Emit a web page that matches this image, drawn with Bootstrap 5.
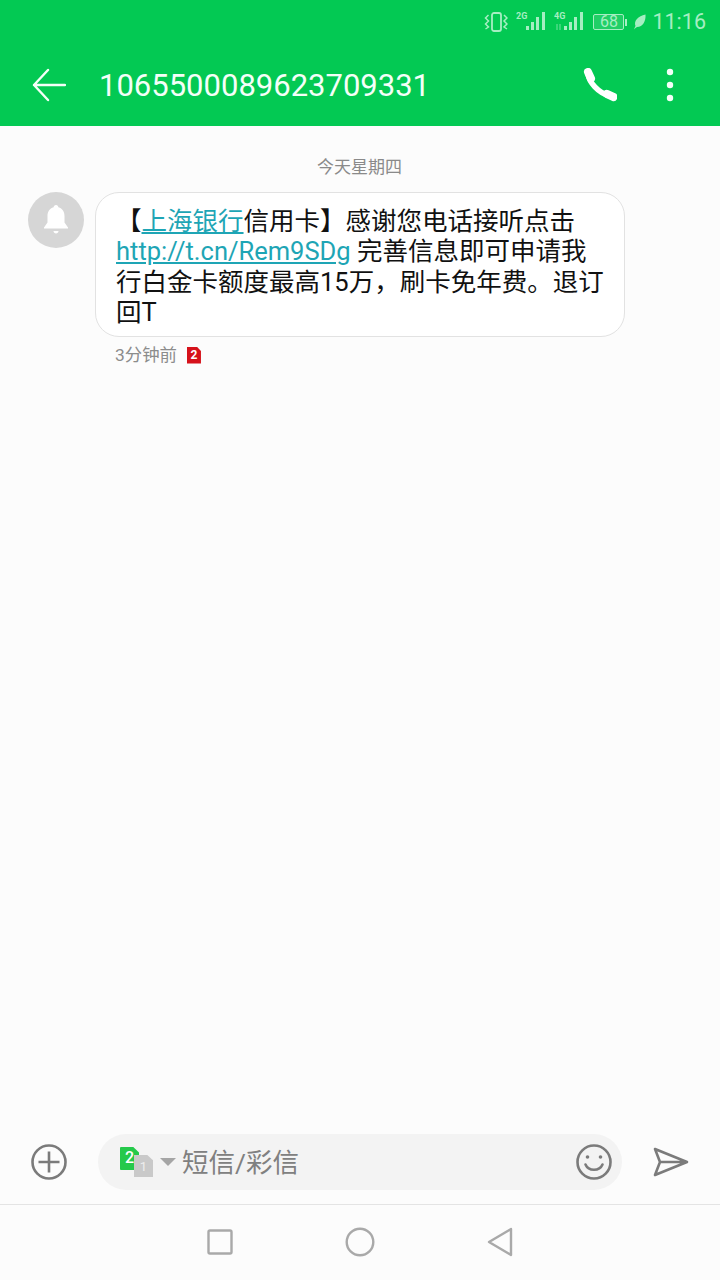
<!DOCTYPE html>
<html lang="zh">
<head>
  <meta charset="UTF-8">
  <meta name="viewport" content="width=device-width, initial-scale=1.0">
  <title>短信</title>
  <link rel="stylesheet" href="https://cdn.jsdelivr.net/npm/bootstrap@5.3.0/dist/css/bootstrap.min.css">
  <style>
    body {
      background: #fcfcfc;
      font-family: Roboto, "Noto Sans CJK SC", sans-serif;
      color: #1a1a1a;
    }
    .phone-page { width: 720px; height: 1280px; overflow: hidden; }
    .top-green { background: #03c953; color: #fff; }
    .status-row { height: 44px; padding-right: 14px; color: #a6eec2; line-height: 1; }
    .status-time { font-size: 21.5px; margin-left: 6px; }
    .st-vib { margin-right: 8px; }
    .st-g2 { margin-right: 7px; }
    .st-g4 { margin-right: 8px; }
    .bat-box { width: 31px; height: 16px; border: 1px solid #a6eec2; border-radius: 2px; font-size: 16px; line-height: 14px; text-align: center; background: rgba(255,255,255,.12); }
    .bat-tip { width: 2px; height: 7px; background: #a6eec2; margin: 0 6px 0 1px; }
    .tool-row { height: 82px; padding-left: 32px; }
    .tool-title { font-size: 31px; margin-left: 33px; line-height: 1; color: #f4fff8; }
    .call-icon { margin-right: 49px; }
    .more-icon { margin-right: 46px; }
    .day-label { font-size: 17px; color: #8a8a8a; text-align: center; padding-top: 32px; height: 66px; line-height: 18px; padding-right: 1px; }
    .avatar-dot { width: 56px; height: 56px; background: #d6d6d6; margin-left: 28px; margin-right: 11px; }
    .msg-bubble { width: 530px; height: 145px; border: 1px solid #e2e2e2; border-radius: 24px; background: #fff; padding: 13px 20px; font-size: 25.5px; line-height: 30.3px; color: #111; white-space: nowrap; }
    .msg-bubble a { color: #1ea5b5; }
    .msg-meta { margin: 8px 0 0 115px; font-size: 17.4px; line-height: 20px; color: #8c8c8c; gap: 10px; }
    .sim-red { width: 14px; height: 17px; background: #d6121b; color: #fff; font-size: 12px; font-weight: 700; line-height: 17px; text-align: center; clip-path: polygon(0 0, 70% 0, 100% 26%, 100% 100%, 0 100%); }
    .composer { height: 84px; padding: 14px 0; }
    .plus-slot { width: 98px; }
    .input-pill { width: 524px; height: 56px; background: #f3f3f3; border-radius: 28px; padding-left: 22px; }
    .sim-stack { width: 34px; height: 30px; }
    .sim-green { left: 0; top: 0; width: 19px; height: 23px; background: #25c94b; color: #fff; font-size: 16px; font-weight: 500; line-height: 22px; text-align: center; border-radius: 1px; clip-path: polygon(0 0, 70% 0, 100% 24%, 100% 100%, 0 100%); }
    .sim-gray { left: 14px; top: 8px; width: 19px; height: 22px; background: #c9c9c9; color: #eee; font-size: 13px; line-height: 24px; text-align: center; clip-path: polygon(0 0, 70% 0, 100% 24%, 100% 100%, 0 100%); }
    .caret-down { width: 0; height: 0; border: 8px solid transparent; border-top: 8px solid #a5a5a5; border-bottom: 0; margin: 0 6px; }
    .input-hint { font-size: 26.5px; color: #808080; line-height: 1; padding-top: 2px; }
    .smile-icon { margin-right: 10px; }
    .send-slot { width: 98px; padding-left: 31px; }
    .nav-strip { height: 76px; border-top: 1px solid #e4e4e4; background: #fcfcfc; padding-bottom: 1px; }
    .nav-slot { width: 140px; }
  </style>
</head>
<body>
  <div class="phone-page d-flex flex-column">
    <div class="top-green">
      <div class="status-row d-flex align-items-center justify-content-end">
        <svg class="st-vib" width="24" height="20" viewBox="0 0 24 20" fill="none" stroke="#a6eec2" stroke-width="1.800"><rect x="8" y="1" width="9" height="18" rx="2"/><path d="M4.500 3L1.500 6 4.500 9 1.500 12 4.500 15 1.500 17M20 3L23 6 20 9 23 12 20 15 23 17" stroke-width="1.500"/></svg>
        <svg class="st-g2" width="31" height="20" viewBox="0 0 31 20" fill="#a6eec2"><text x="0" y="7" font-size="9" font-weight="700" font-family="Roboto">2G</text><rect x="10" y="14" width="3" height="4"/><rect x="15" y="10" width="3" height="8"/><rect x="20" y="5" width="3" height="13"/><rect x="26" y="0" width="3" height="18"/></svg>
        <svg class="st-g4" width="31" height="20" viewBox="0 0 31 20" fill="#a6eec2"><text x="0" y="7" font-size="9" font-weight="700" font-family="Roboto">4G</text><rect x="2" y="12" width="2" height="6" opacity=".35"/><rect x="5" y="12" width="2" height="6" opacity=".35"/><rect x="10" y="14" width="3" height="4"/><rect x="15" y="10" width="3" height="8"/><rect x="20" y="5" width="3" height="13"/><rect x="26" y="0" width="3" height="18"/></svg>
        <div class="bat-box">68</div><div class="bat-tip"></div>
        <svg width="13" height="16" viewBox="0 0 13 16" fill="#a6eec2"><path d="M1 15.500C1.500 14 2 13 2.500 12 .5 7 5 2 12.500 .5 13 7 10 13 4 13 3 13.500 2 14.500 1 15.500z"/></svg>
        <span class="status-time">11:16</span>
      </div>
      <div class="tool-row d-flex align-items-center">
        <svg width="34" height="34" viewBox="0 0 34 34" fill="none" stroke="#f4fff8" stroke-width="2.400" stroke-linecap="round" stroke-linejoin="round"><path d="M33 17H2M16 2L2 17l14 15"/></svg>
        <span class="tool-title">1065500089623709331</span>
        <svg class="call-icon ms-auto" width="34" height="34" viewBox="0 0 34 34" fill="none" stroke="#fff" stroke-linecap="round"><path d="M5 6C6 14 15 25 27 28" stroke-width="5.500"/><path d="M5 4l3 6.500M24 26l6.500 3" stroke-width="8"/></svg>
        <svg class="more-icon" width="8" height="34" viewBox="0 0 8 34" fill="#f4fff8"><circle cx="4" cy="4" r="3.200"/><circle cx="4" cy="17" r="3.200"/><circle cx="4" cy="30" r="3.200"/></svg>
      </div>
    </div>

    <main class="flex-grow-1">
      <div class="day-label">今天星期四</div>
      <div class="d-flex align-items-start">
        <div class="avatar-dot rounded-circle d-flex align-items-center justify-content-center flex-shrink-0">
          <svg width="26" height="30" viewBox="0 0 26 30" fill="#fff"><path d="M13 0c1.400 0 2.400 1 2.400 2.300C19.500 3.400 21.500 7 21.500 11v6.500L25 22.500v1H1v-1l3.500-5V11c0-4 2-7.600 6.100-8.700C10.600 1 11.600 0 13 0z"/><path d="M10.500 26h5c0 1.500-1.100 2.500-2.500 2.500S10.500 27.500 10.500 26z"/></svg>
        </div>
        <div class="msg-bubble">【<a href="#">上海银行</a>信用卡】感谢您电话接听点击<br><a href="#">http://t.cn/Rem9SDg</a> 完善信息即可申请我<br>行白金卡额度最高15万，刷卡免年费。退订<br>回T</div>
      </div>
      <div class="msg-meta d-flex align-items-center">
        <span>3分钟前</span>
        <span class="sim-red">2</span>
      </div>
    </main>

    <div class="composer d-flex align-items-center">
      <div class="plus-slot d-flex justify-content-center">
        <svg width="36" height="36" viewBox="0 0 36 36" fill="none" stroke="#7b7b7b" stroke-width="2.600"><circle cx="18" cy="18" r="16.500"/><path d="M18 7.500v21M7.500 18h21"/></svg>
      </div>
      <div class="input-pill d-flex align-items-center">
        <div class="sim-stack position-relative flex-shrink-0">
          <div class="sim-green position-absolute">2</div>
          <div class="sim-gray position-absolute">1</div>
        </div>
        <span class="caret-down"></span>
        <span class="input-hint">短信/彩信</span>
        <svg class="smile-icon ms-auto" width="36" height="36" viewBox="0 0 36 36" fill="none" stroke="#7b7b7b" stroke-width="2.600" stroke-linecap="round"><circle cx="18" cy="18" r="16.500"/><path d="M9.500 20.500c3 7 14 7 17 0"/><circle cx="11.500" cy="13" r="1.800" fill="#7b7b7b" stroke="none"/><circle cx="24.500" cy="13" r="1.800" fill="#7b7b7b" stroke="none"/></svg>
      </div>
      <div class="send-slot">
        <svg class="d-block" width="36" height="30" viewBox="0 0 36 30" fill="none" stroke="#7b7b7b" stroke-width="2.600" stroke-linejoin="round"><path d="M2 2l32 13L2 28l5-13zM7 15h27"/></svg>
      </div>
    </div>

    <div class="nav-strip d-flex align-items-center justify-content-center">
      <div class="nav-slot d-flex justify-content-center">
        <svg width="26" height="26" viewBox="0 0 26 26" fill="none" stroke="#a9a9a9" stroke-width="2.400"><rect x="1.500" y="1.500" width="23" height="23" rx="1.500"/></svg>
      </div>
      <div class="nav-slot d-flex justify-content-center">
        <svg width="30" height="30" viewBox="0 0 30 30" fill="none" stroke="#a9a9a9" stroke-width="2.400"><circle cx="15" cy="15" r="13.300"/></svg>
      </div>
      <div class="nav-slot d-flex justify-content-center">
        <svg width="26" height="30" viewBox="0 0 26 30" fill="none" stroke="#a9a9a9" stroke-width="2.400" stroke-linejoin="round"><path d="M24 2L2 15l22 13z"/></svg>
      </div>
    </div>
  </div>
  <script src="https://cdn.jsdelivr.net/npm/bootstrap@5.3.0/dist/js/bootstrap.bundle.min.js"></script>
</body>
</html>
